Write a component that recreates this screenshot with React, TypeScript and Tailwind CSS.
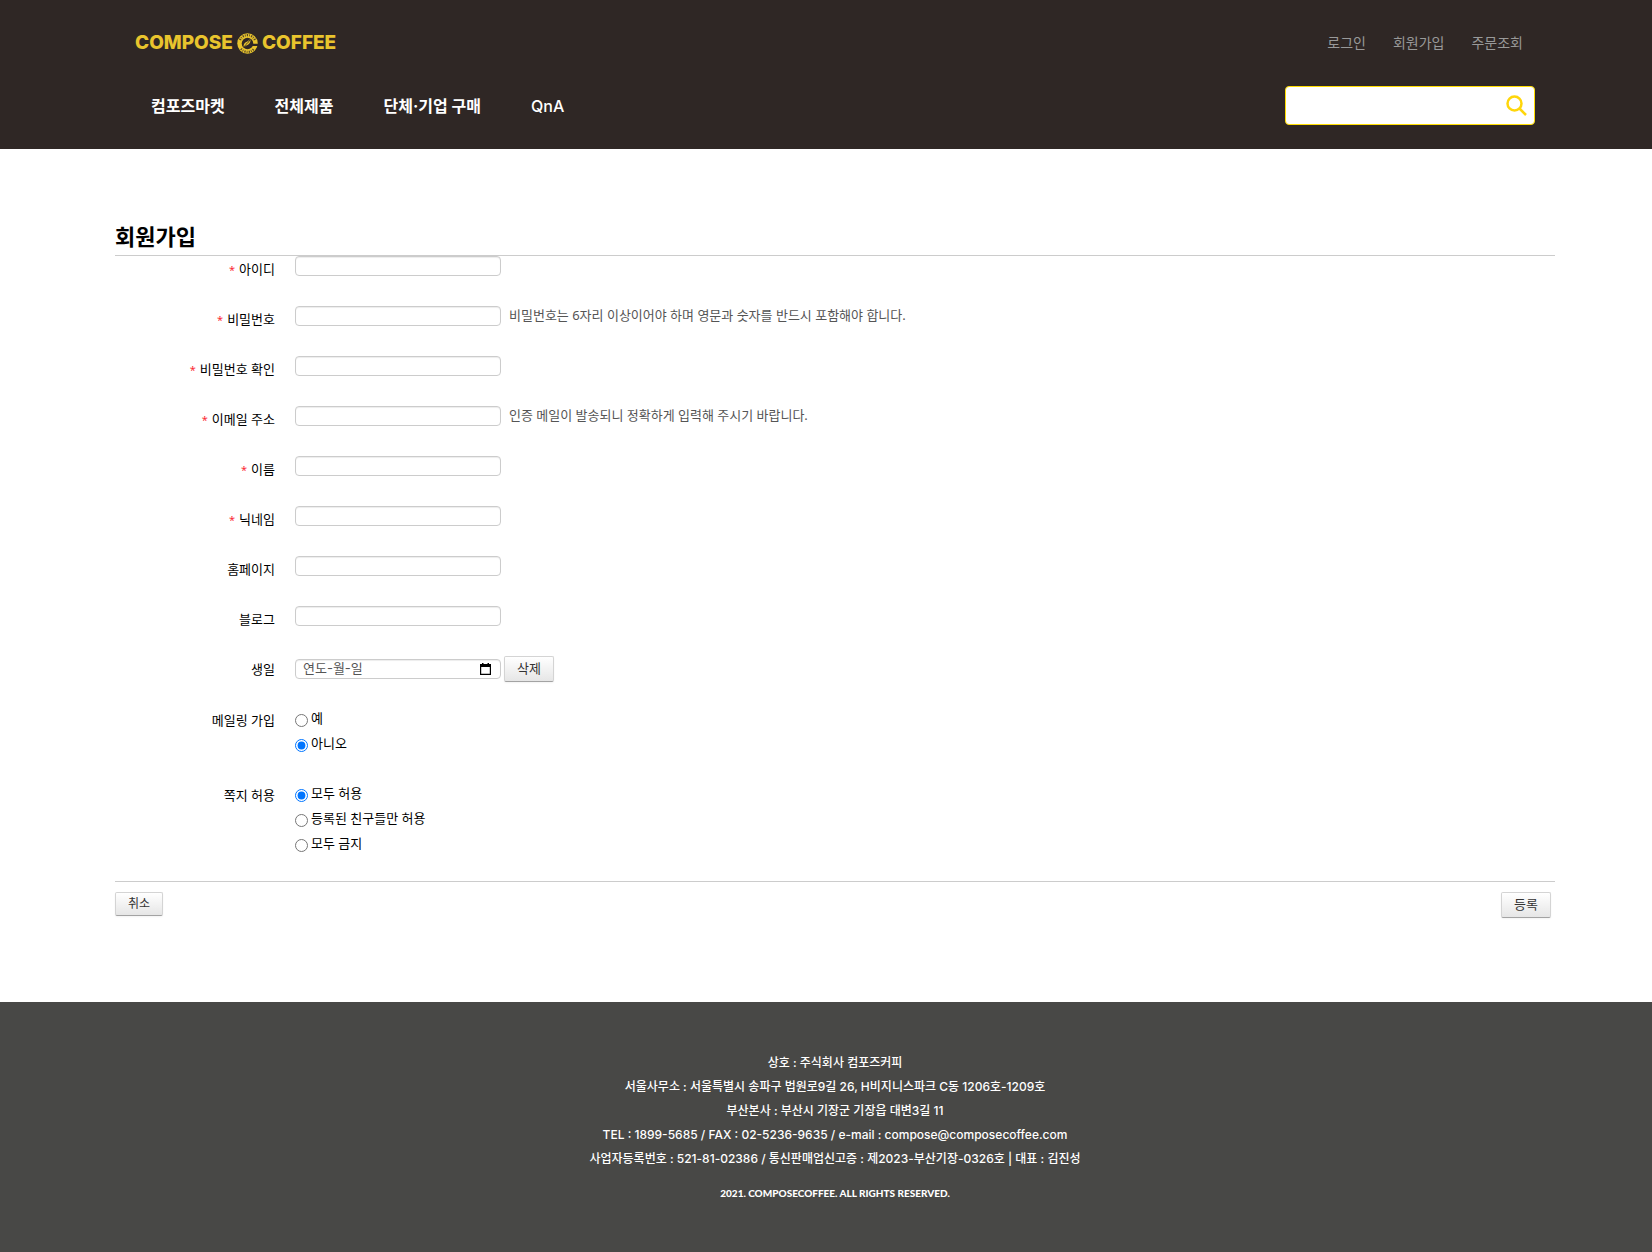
import type { ReactNode } from "react";

const kr = "font-['Noto_Sans','Noto_Sans_CJK_KR',sans-serif]";
const brand = "font-['Inter','Noto_Sans_CJK_KR',sans-serif]";

const NAV = ["컴포즈마켓", "전체제품", "단체·기업 구매", "QnA"];
const ACCOUNT = ["로그인", "회원가입", "주문조회"];

const FIELDS = [
  { id: "user_id", label: "아이디", type: "text", required: true },
  { id: "password", label: "비밀번호", type: "password", required: true, help: "비밀번호는 6자리 이상이어야 하며 영문과 숫자를 반드시 포함해야 합니다." },
  { id: "password2", label: "비밀번호 확인", type: "password", required: true },
  { id: "email", label: "이메일 주소", type: "email", required: true, help: "인증 메일이 발송되니 정확하게 입력해 주시기 바랍니다." },
  { id: "user_name", label: "이름", type: "text", required: true },
  { id: "nick_name", label: "닉네임", type: "text", required: true },
  { id: "homepage", label: "홈페이지", type: "url" },
  { id: "blog", label: "블로그", type: "url" },
];

const COMPANY = [
  "상호 : 주식회사 컴포즈커피",
  "서울사무소 : 서울특별시 송파구 법원로9길 26, H비지니스파크 C동 1206호-1209호",
  "부산본사 : 부산시 기장군 기장읍 대변3길 11",
  "TEL : 1899-5685 / FAX : 02-5236-9635 / e-mail : compose@composecoffee.com",
  "사업자등록번호 : 521-81-02386 / 통신판매업신고증 : 제2023-부산기장-0326호 | 대표 : 김진성",
];

const inputClass =
  "h-5 w-[206px] rounded border border-[#ccc] bg-white px-[7px] pb-0.5 font-['Inter','Noto_Sans_CJK_KR',sans-serif] text-[13px] leading-4 text-[#555] shadow-[inset_0_1px_1px_rgba(0,0,0,0.075)] outline-none placeholder:text-[#555]";

function Emblem() {
  return (
    <svg viewBox="0 0 42 42" className="size-[21px]" aria-hidden="true">
      <circle cx="21" cy="21" r="20.5" fill="#e9c42d" />
      <path d="M6 14A16.500 16.500 0 0 1 36 14M8 31.500A16.500 16.500 0 0 0 34 31.500" fill="none" stroke="#2f2725" strokeWidth="4.500" strokeDasharray="2.500 2.200 1.500 2.400" opacity="0.8" />
      <circle cx="21" cy="21" r="11.500" fill="#2f2725" />
      <path d="M29 21.500h13v4.500H29z" fill="#2f2725" />
      <path d="M13.500 28.500c-1.500-5 1.500-9 5-10.500 3-1.500 5-3 8-5.500 1.500 5-1 9-4.500 11-3 1.500-5 2.500-8.500 5z" fill="#e9c42d" />
      <path d="M14 28c3-5.500 8-7 12-14.500" fill="none" stroke="#2f2725" strokeWidth="1.700" />
    </svg>
  );
}

function Row({ label, htmlFor, required, children }: { label: string; htmlFor?: string; required?: boolean; children: ReactNode }) {
  return (
    <div className="flex min-h-[50px] gap-5">
      <label htmlFor={htmlFor} className="w-40 shrink-0 pt-[3px] text-right leading-5">
        {required && <span className="mr-1 text-[11px] text-red-500">*</span>}
        {label}
      </label>
      {children}
    </div>
  );
}

function RadioRow({ label, name, options, selected }: { label: string; name: string; options: string[]; selected: number }) {
  return (
    <fieldset className="flex gap-5 pb-[25px]">
      <legend className="float-left w-40 shrink-0 pt-1 text-right leading-5">{label}</legend>
      <div>
        {options.map((option, i) => (
          <label key={option} className="flex h-[25px] items-center gap-[3px]">
            <input type="radio" name={name} defaultChecked={i === selected} className="mt-1 size-[13px]" />
            {option}
          </label>
        ))}
      </div>
    </fieldset>
  );
}

function Button({ children, type = "button", small = false }: { children: ReactNode; type?: "button" | "submit"; small?: boolean }) {
  return (
    <button
      type={type}
      className={`rounded-[2px] border border-[#d4d4d4] border-b-[#a3a3a3] bg-linear-to-b from-white to-[#e6e6e6] px-3 text-[#333] shadow-[0_1px_2px_rgba(0,0,0,0.05)] ${small ? "h-6 text-[12px] leading-5" : "h-[26px] pb-[3px] text-[13px] leading-5"}`}
    >
      {children}
    </button>
  );
}

export default function App() {
  return (
    <div className={`flex min-h-screen flex-col bg-white text-[13px] text-black ${kr}`}>
      <header className="h-[149px] bg-[#2f2725] pl-[18px]">
        <div className="mx-auto max-w-[1440px] px-5">
          <div className="flex items-center justify-between pt-[30px] pr-3">
            <a href="#" aria-label="COMPOSE COFFEE" className="flex items-center gap-1 font-['Inter',sans-serif] text-[19px] leading-[26px] font-extrabold text-[#e9c42d]">
              COMPOSE
              <Emblem />
              COFFEE
            </a>
            <nav className="flex gap-[27px] text-[14px] leading-6 text-[#999]">
              {ACCOUNT.map((item) => (
                <a key={item} href="#">{item}</a>
              ))}
            </nav>
          </div>
          <div className="mt-[30px] flex items-center justify-between">
            <nav className={`flex gap-[50px] pl-4 text-[16px] leading-6 font-bold text-white ${brand}`}>
              {NAV.map((item) => (
                <a key={item} href="#" className="last:font-medium">{item}</a>
              ))}
            </nav>
            <form className="flex h-[39px] w-[250px] items-center rounded border border-[#fd0] bg-white pr-[7px]">
              <input type="search" aria-label="검색" className="h-full min-w-0 flex-1 px-2 text-[14px] outline-none" />
              <button type="button" aria-label="검색하기">
                <svg viewBox="0 0 21 21" className="size-[21px]" fill="none" stroke="#ffd60a" strokeWidth="2.500">
                  <circle cx="8.500" cy="8.500" r="7" />
                  <path d="M13.500 13.500l6.500 6.500" />
                </svg>
              </button>
            </form>
          </div>
        </div>
      </header>

      <main className="flex-1 pt-[70px] pb-[84px] pl-[18px]">
        <form className="mx-auto max-w-[1440px]">
          <h1 className="border-b border-[#ccc] pb-px text-[22px] leading-[35px] font-bold">회원가입</h1>
          {FIELDS.map((f) => (
            <Row key={f.id} label={f.label} htmlFor={f.id} required={f.required}>
              <div className="flex h-5 items-center gap-2">
                <input id={f.id} type={f.type} className={inputClass} />
                {f.help && <p className="pb-0.5 leading-5 text-[#555]">{f.help}</p>}
              </div>
            </Row>
          ))}
          <Row label="생일" htmlFor="birthday">
            <div className="flex items-start gap-[3px]">
              <div className="relative mt-[3px] flex">
                <input id="birthday" type="text" placeholder="연도-월-일" className={inputClass} />
                <button type="button" aria-label="날짜 선택" className="absolute top-1 right-[10px]">
                  <svg viewBox="0 0 11 12" className="h-3 w-[11px]">
                    <path d="M2 0h1.500v1h4V0H9v1h2v11H0V1h2zM1.200 4v6.800h8.600V4z" fillRule="evenodd" />
                  </svg>
                </button>
              </div>
              <Button>삭제</Button>
            </div>
          </Row>
          <RadioRow label="메일링 가입" name="mailing" options={["예", "아니오"]} selected={1} />
          <RadioRow label="쪽지 허용" name="message" options={["모두 허용", "등록된 친구들만 허용", "모두 금지"]} selected={0} />
          <div className="flex items-start justify-between border-t border-[#ccc] pt-[10px] pr-1">
            <Button small>취소</Button>
            <Button type="submit">등록</Button>
          </div>
        </form>
      </main>

      <footer className={`h-[250px] bg-[#484846] pt-[49px] pl-[18px] text-center text-[12px] leading-6 font-medium text-white ${brand}`}>
        {COMPANY.map((line) => (
          <p key={line}>{line}</p>
        ))}
        <p className="mt-[10px] font-['Lato',sans-serif] text-[10px] font-black">2021. COMPOSECOFFEE. ALL RIGHTS RESERVED.</p>
      </footer>
    </div>
  );
}
